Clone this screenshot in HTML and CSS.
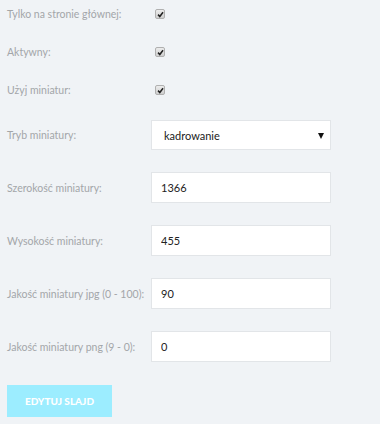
FILE: index.html
```html
<!DOCTYPE html>
<html lang="pl">
<head>
<meta charset="utf-8">
<title>Edytuj slajd</title>
<link rel="stylesheet" href="styles.css">
</head>
<body>
<form class="form">
  <div class="row row-check">
    <label class="label">Tylko na stronie głównej:</label>
    <span class="check"><svg viewBox="0 0 10 10" width="7" height="7"><path d="M1.5 5.2 L4 7.8 L8.6 1.8" fill="none" stroke="#222" stroke-width="2.2"/></svg></span>
  </div>
  <div class="row row-check">
    <label class="label">Aktywny:</label>
    <span class="check"><svg viewBox="0 0 10 10" width="7" height="7"><path d="M1.5 5.2 L4 7.8 L8.6 1.8" fill="none" stroke="#222" stroke-width="2.2"/></svg></span>
  </div>
  <div class="row row-check">
    <label class="label">Użyj miniatur:</label>
    <span class="check"><svg viewBox="0 0 10 10" width="7" height="7"><path d="M1.5 5.2 L4 7.8 L8.6 1.8" fill="none" stroke="#222" stroke-width="2.2"/></svg></span>
  </div>
  <div class="row row-select">
    <label class="label">Tryb miniatury:</label>
    <div class="select"><span>kadrowanie</span></div>
  </div>
  <div class="row row-input">
    <label class="label">Szerokość miniatury:</label>
    <input class="input" type="text" value="1366">
  </div>
  <div class="row row-input">
    <label class="label">Wysokość miniatury:</label>
    <input class="input" type="text" value="455">
  </div>
  <div class="row row-input">
    <label class="label">Jakość miniatury jpg (0 - 100):</label>
    <input class="input" type="text" value="90">
  </div>
  <div class="row row-input">
    <label class="label">Jakość miniatury png (9 - 0):</label>
    <input class="input" type="text" value="0">
  </div>
  <button class="btn" type="button">Edytuj slajd</button>
</form>
</body>
</html>
```

FILE: styles.css
```css
html, body {
  margin: 0;
  padding: 0;
  background: #f0f3f6;
}
body {
  font-family: Lato, "Open Sans", sans-serif;
  font-size: 10.5px;
  color: #a3a6a9;
}
.form {
  display: flex;
  flex-direction: column;
  padding: 0 7px;
}
.row {
  display: grid;
  grid-template-columns: 144px 180px;
  align-items: center;
}
.row-check {
  height: 28px;
  margin-bottom: 10px;
}
.row-check:nth-child(3) {
  margin-bottom: 16px;
}
.row-select {
  height: 30px;
  margin-bottom: 22px;
}
.row-input {
  height: 31px;
  margin-bottom: 22px;
}
.label {
  color: #a3a6a9;
  white-space: nowrap;
}
.check {
  width: 8px;
  height: 8px;
  margin-left: 4px;
  border: 1px solid #b0b0b0;
  border-radius: 2px;
  background: linear-gradient(#ececec, #cfcfcf);
  display: flex;
  align-items: center;
  justify-content: center;
}
.select {
  position: relative;
  box-sizing: border-box;
  height: 30px;
  background: #fff;
  border: 1px solid #e2e5e8;
  display: flex;
  align-items: center;
  padding-left: 12px;
  color: #222;
  font-size: 11px;
}
.select::after {
  content: "";
  position: absolute;
  right: 6px;
  top: 12px;
  border-left: 3.5px solid transparent;
  border-right: 3.5px solid transparent;
  border-top: 6px solid #111;
}
.input {
  box-sizing: border-box;
  width: 180px;
  height: 31px;
  margin: 0;
  background: #fff;
  border: 1px solid #e2e5e8;
  padding: 0 9px;
  font-family: Lato, "Open Sans", sans-serif;
  font-size: 11px;
  color: #222;
  outline: none;
}
.btn {
  align-self: flex-start;
  width: 105px;
  height: 32px;
  margin-top: 1px;
  background: #9cedff;
  border: none;
  color: #fff;
  font-family: Lato, "Open Sans", sans-serif;
  font-weight: 900;
  font-size: 10px;
  text-transform: uppercase;
  padding: 0;
}
```
